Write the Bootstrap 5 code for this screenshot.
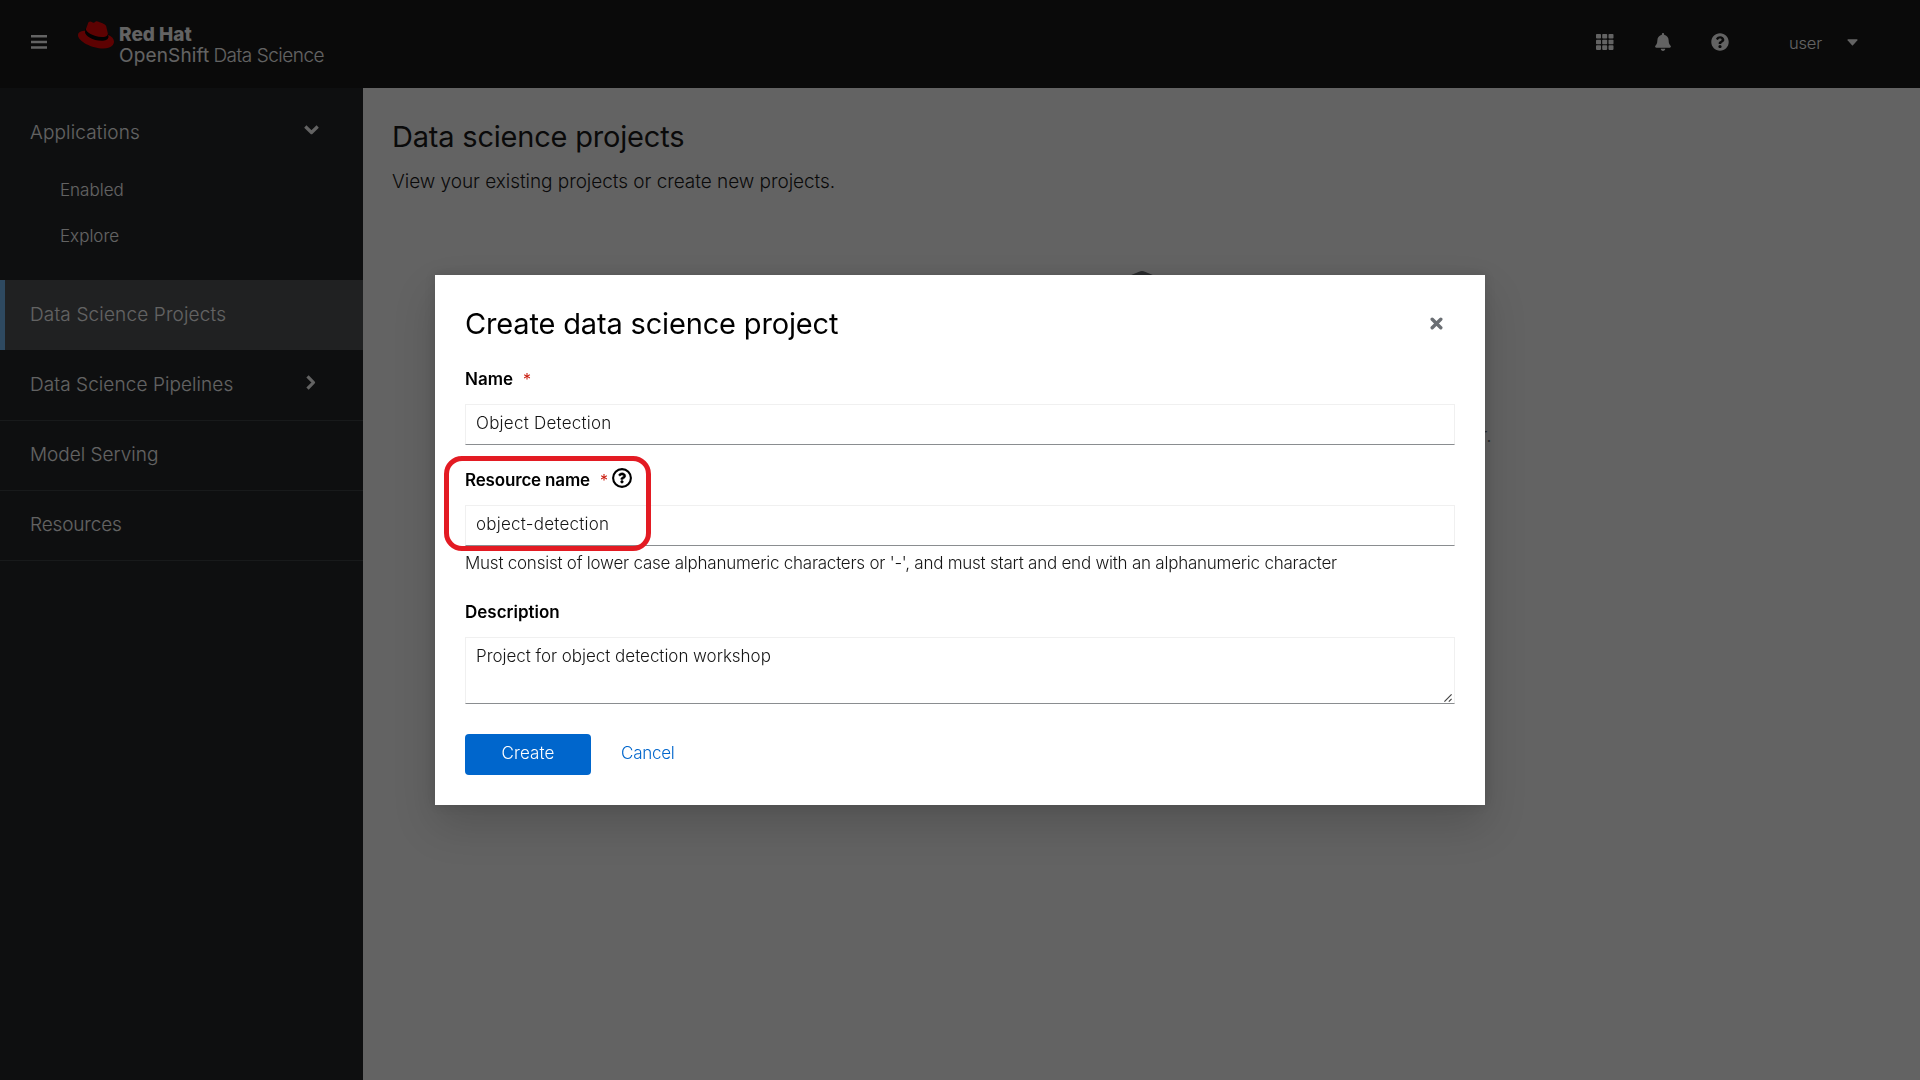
<!DOCTYPE html>
<html lang="en">
<head>
<meta charset="utf-8">
<meta name="viewport" content="width=device-width, initial-scale=1">
<title>Red Hat OpenShift Data Science</title>
<link href="https://cdn.jsdelivr.net/npm/bootstrap@5.3.0/dist/css/bootstrap.min.css" rel="stylesheet">
<style>
body{font-family:Inter,"Liberation Sans",sans-serif;font-size:17px;font-weight:300;line-height:26px;color:#151515;overflow:hidden}
svg{display:block;flex:none}
.app-top{height:88px;background:#151515;color:#fff;padding:0 62px 0 31px}
.burger{margin-top:35px}
.fedora{margin:21px 0 0 31px}
.brand-text{font-size:19px;line-height:20.5px;margin:25px 0 0 5px;white-space:nowrap}
.brand-text b{font-weight:800}
.brand-text .os{font-weight:400;letter-spacing:.15px}
.brand-text .ds{letter-spacing:-.5px;margin-left:4px}
.top-tools{margin-top:33px}
.tool-bell{margin-left:41px}
.tool-help{margin-left:40px}
.tool-user{margin:-3px 0 0 60px;font-size:16.5px;width:34px;letter-spacing:-.2px}
.tool-caret{margin:6px 0 0 24px}
.app-body{height:992px}
.app-side{width:363px;background:#212427;padding-top:9px;color:#fff}
.side-item{height:70px;padding:0 44px 0 30px;font-size:19px;color:#fff;letter-spacing:.08px}
.side-item.first-item{padding-top:2px;letter-spacing:.15px}
.side-item.first-item svg{margin-top:-7px}
.side-item .chev-right{margin:-5px 3px 0 0}
.side-sub{height:46px;padding-left:60px;color:#fff}
.side-gap{height:21px}
.side-item.current{background:#4f5255;box-shadow:inset 5px 0 #73bcf7;letter-spacing:.15px}
.ruled{border-top:1px solid #3c3f42;padding-bottom:2px;letter-spacing:0}
.ruled-end{height:71px;border-bottom:1px solid #3c3f42;letter-spacing:-.15px}
.app-main{background:#fff;padding:30px 29px}
.app-main h1{font-size:29px;line-height:37px;font-weight:400;letter-spacing:-.2px;margin:0}
.intro{font-size:19px;line-height:28px;letter-spacing:-.04px;margin-top:13px}
.empty{width:700px;margin-top:75px}
.empty p{font-size:19px;color:#6a6e73;margin-top:84px}
.shade{--bs-backdrop-bg:#030303;--bs-backdrop-opacity:.62}
.project-dialog{max-width:1050px}
.project-dialog .modal-content{border:0;border-radius:0;padding:30px;box-shadow:0 20px 40px rgba(3,3,3,.16),0 0 10px rgba(3,3,3,.12);color:#151515}
.modal-title{font-size:29px;line-height:37px;font-weight:400;letter-spacing:-.16px;color:#000}
.closer{margin-right:12px;color:#6a6e73}
.field-label{font-weight:600;color:#000;height:26px;margin-bottom:12px}
.label-name{margin-top:24px}
.label-resource{margin-top:22px;letter-spacing:-.17px}
.label-desc{margin-top:23px}
.req{color:#c9190b;font-weight:400;font-size:16px;margin-left:10px;width:7px}
.help{margin:-4px 0 0 5px}
.form-control.field{height:41px;border-radius:0;border:1px solid #f0f0f0;border-bottom-color:#8a8d90;padding:0 10px 3px;font-size:17px;font-weight:300;line-height:26px;color:#151515;letter-spacing:.23px}
.form-control.area{height:67px;min-height:67px;padding-top:5px;letter-spacing:-.03px;resize:none}
.grip{position:absolute;right:3px;bottom:2px}
.hint{letter-spacing:-.236px;margin-top:4px;white-space:nowrap}
.actions{margin-top:30px}
.btn.act{height:41px;font-size:17px;font-weight:300;line-height:24px;border-radius:4px;padding:0 0 3px;border:0}
.btn.create{width:126px;background:#06c;color:#fff;letter-spacing:.1px}
.btn.cancel{color:#06c;text-decoration:none;margin-left:30px;letter-spacing:-.25px}
.callout-box{position:absolute;left:9px;top:181px;width:207px;height:95px;border:5px solid #e31b23;border-radius:18px}
</style>
<script src="https://cdn.jsdelivr.net/npm/bootstrap@5.3.0/dist/js/bootstrap.bundle.min.js"></script>
</head>
<body>
<header class="app-top d-flex align-items-start">
  <svg class="burger" width="16" height="14" viewBox="0 0 16 14" fill="#fff"><path d="M0 0h16v2.500H0zM0 5.700h16v2.500H0zM0 11.300h16v2.500H0z"/></svg>
  <svg class="fedora" width="36" height="28" viewBox="0 2.8 24 18.6"><path d="M5 8l16 4-.3 4-5 .6L8 15l-3.600-4z"/><path fill="#e00" d="M16.009 13.386c1.577 0 3.86-.326 3.86-2.202a1.765 1.765 0 0 0-.04-.431l-.94-4.08c-.216-.898-.406-1.305-1.982-2.093-1.223-.625-3.888-1.658-4.676-1.658-.733 0-.947.946-1.822.946-.842 0-1.467-.706-2.255-.706-.757 0-1.25.515-1.63 1.576 0 0-1.06 2.99-1.197 3.424a.81.81 0 0 0-.028.245c0 1.162 4.577 4.974 10.71 4.974m4.101-1.435c.218 1.032.218 1.14.218 1.277 0 1.765-1.984 2.745-4.593 2.745-5.895.004-11.06-3.451-11.06-5.734a2.326 2.326 0 0 1 .19-.925C2.746 9.415 0 9.794 0 12.217c0 3.969 9.405 8.861 16.851 8.861 5.71 0 7.149-2.582 7.149-4.62 0-1.605-1.387-3.425-3.887-4.512"/></svg>
  <div class="brand-text"><b>Red Hat</b><br><span class="os">OpenShift</span><span class="ds">Data Science</span></div>
  <div class="top-tools d-flex ms-auto">
    <svg width="18" height="18" viewBox="0 0 18 18" fill="#fff"><g id="r"><rect y="1" width="5" height="4.600" rx=".8"/><rect x="6.200" y="1" width="5" height="4.600" rx=".8"/><rect x="12.500" y="1" width="5" height="4.600" rx=".8"/></g><use href="#r" y="5.700"/><use href="#r" y="11.300"/></svg>
    <svg class="tool-bell" width="16" height="18" viewBox="0 0 448 512" fill="#fff"><path d="M224 512c35.320 0 63.970-28.650 63.970-64H160.030c0 35.350 28.650 64 63.970 64zm215.390-149.710c-19.320-20.760-55.470-51.990-55.470-154.290 0-77.700-54.480-139.900-127.940-155.160V32c0-17.670-14.320-32-31.980-32s-31.980 14.330-31.980 32v20.840C118.560 68.100 64.080 130.300 64.080 208c0 102.300-36.150 133.530-55.470 154.290-6 6.450-8.660 14.160-8.610 21.710.11 16.400 12.980 32 32.100 32h383.800c19.120 0 32-15.600 32.100-32 .05-7.550-2.610-15.270-8.610-21.710z"/></svg>
    <svg class="tool-help" width="18" height="18" viewBox="0 0 512 512" fill="#fff"><path d="M504 256c0 136.997-111.043 248-248 248S8 392.997 8 256C8 119.083 119.043 8 256 8s248 111.083 248 248zM262.655 90c-54.497 0-89.255 22.957-116.549 63.758-3.536 5.286-2.353 12.415 2.715 16.258l34.699 26.310c5.205 3.947 12.621 3.008 16.665-2.122 17.864-22.658 30.113-35.797 57.303-35.797 20.429 0 45.698 13.148 45.698 32.958 0 14.976-12.363 22.667-32.534 33.976C247.128 238.528 216 254.941 216 296v4c0 6.627 5.373 12 12 12h56c6.627 0 12-5.373 12-12v-1.333c0-28.462 83.186-29.647 83.186-106.667 0-58.002-60.165-102-116.531-102zM256 338c-25.365 0-46 20.635-46 46 0 25.364 20.635 46 46 46s46-20.636 46-46c0-25.364-20.635-46-46-46z"/></svg>
    <span class="tool-user">user</span>
    <svg class="tool-caret" width="11" height="7" viewBox="0 0 11 7" fill="#fff"><path d="M1 .2h9q1 .3.400 1.100L6 6.200q-.5.500-1 0L.6 1.300Q0 .5 1 .2z"/></svg>
  </div>
</header>
<div class="app-body d-flex">
  <nav class="app-side flex-shrink-0">
    <div class="side-item first-item d-flex align-items-center justify-content-between">Applications<svg width="15" height="10" viewBox="0 0 15 10" fill="none" stroke="#fff" stroke-width="3.200" stroke-linejoin="round"><path d="M1.300 1.500l6.200 6 6.200-6"/></svg></div>
    <div class="side-sub d-flex align-items-center">Enabled</div>
    <div class="side-sub d-flex align-items-center">Explore</div>
    <div class="side-gap"></div>
    <div class="side-item current d-flex align-items-center">Data Science Projects</div>
    <div class="side-item d-flex align-items-center justify-content-between">Data Science Pipelines<svg class="chev-right" width="10" height="15" viewBox="0 0 10 15" fill="none" stroke="#fff" stroke-width="3.200" stroke-linejoin="round"><path d="M1.500 1.300l6 6.200-6 6.200"/></svg></div>
    <div class="side-item ruled d-flex align-items-center">Model Serving</div>
    <div class="side-item ruled ruled-end d-flex align-items-center">Resources</div>
  </nav>
  <main class="app-main flex-grow-1">
    <h1>Data science projects</h1>
    <p class="intro mb-0">View your existing projects or create new projects.</p>
    <div class="empty mx-auto d-flex flex-column align-items-center">
      <svg width="68" height="68" viewBox="0 0 68 68" fill="#6a6e73"><path d="M31 .8q3-1.400 6 0L64 12v42L34 67 4 54V12z"/></svg>
      <p class="w-100 text-end mb-0">r.</p>
    </div>
  </main>
</div>

<div class="modal-backdrop shade show"></div>
<div class="modal d-block" tabindex="-1" role="dialog" aria-modal="true">
  <div class="modal-dialog modal-dialog-centered project-dialog my-0 min-vh-100">
    <div class="modal-content">
      <div class="d-flex align-items-center justify-content-between">
        <h2 class="modal-title">Create data science project</h2>
        <svg class="closer" width="13" height="13" viewBox="0 0 13 13" fill="none" stroke="currentColor" stroke-width="3.400" stroke-linecap="round"><path d="M2.200 2.200l8.600 8.600M10.800 2.200l-8.600 8.600"/></svg>
      </div>
      <label class="field-label label-name d-flex">Name<span class="req">*</span></label>
      <input class="form-control field" value="Object Detection">
      <label class="field-label label-resource d-flex align-items-center">Resource name<span class="req">*</span>
        <svg class="help" width="20" height="20" viewBox="0 0 20 20"><circle cx="10" cy="10" r="8.900" fill="none" stroke="#000" stroke-width="2.100"/><path transform="translate(2.200 2.100) scale(.0304)" stroke="#000" stroke-width="14" d="M262.655 90c-54.497 0-89.255 22.957-116.549 63.758-3.536 5.286-2.353 12.415 2.715 16.258l34.699 26.310c5.205 3.947 12.621 3.008 16.665-2.122 17.864-22.658 30.113-35.797 57.303-35.797 20.429 0 45.698 13.148 45.698 32.958 0 14.976-12.363 22.667-32.534 33.976C247.128 238.528 216 254.941 216 296v4c0 6.627 5.373 12 12 12h56c6.627 0 12-5.373 12-12v-1.333c0-28.462 83.186-29.647 83.186-106.667 0-58.002-60.165-102-116.531-102zM256 338c-25.365 0-46 20.635-46 46 0 25.364 20.635 46 46 46s46-20.636 46-46c0-25.364-20.635-46-46-46z"/></svg>
      </label>
      <input class="form-control field" value="object-detection">
      <div class="hint">Must consist of lower case alphanumeric characters or '-', and must start and end with an alphanumeric character</div>
      <label class="field-label label-desc">Description</label>
      <div class="position-relative">
        <textarea class="form-control field area">Project for object detection workshop</textarea>
        <svg class="grip" width="8" height="8" viewBox="0 0 8 8" fill="none" stroke="#444" stroke-width="1.200"><path d="M.4 7.600L7.600.4M4.800 7.600l2.800-2.800"/></svg>
      </div>
      <div class="actions d-flex">
        <button class="btn act create">Create</button>
        <button class="btn act cancel">Cancel</button>
      </div>
      <div class="callout-box"></div>
    </div>
  </div>
</div>
</body>
</html>
